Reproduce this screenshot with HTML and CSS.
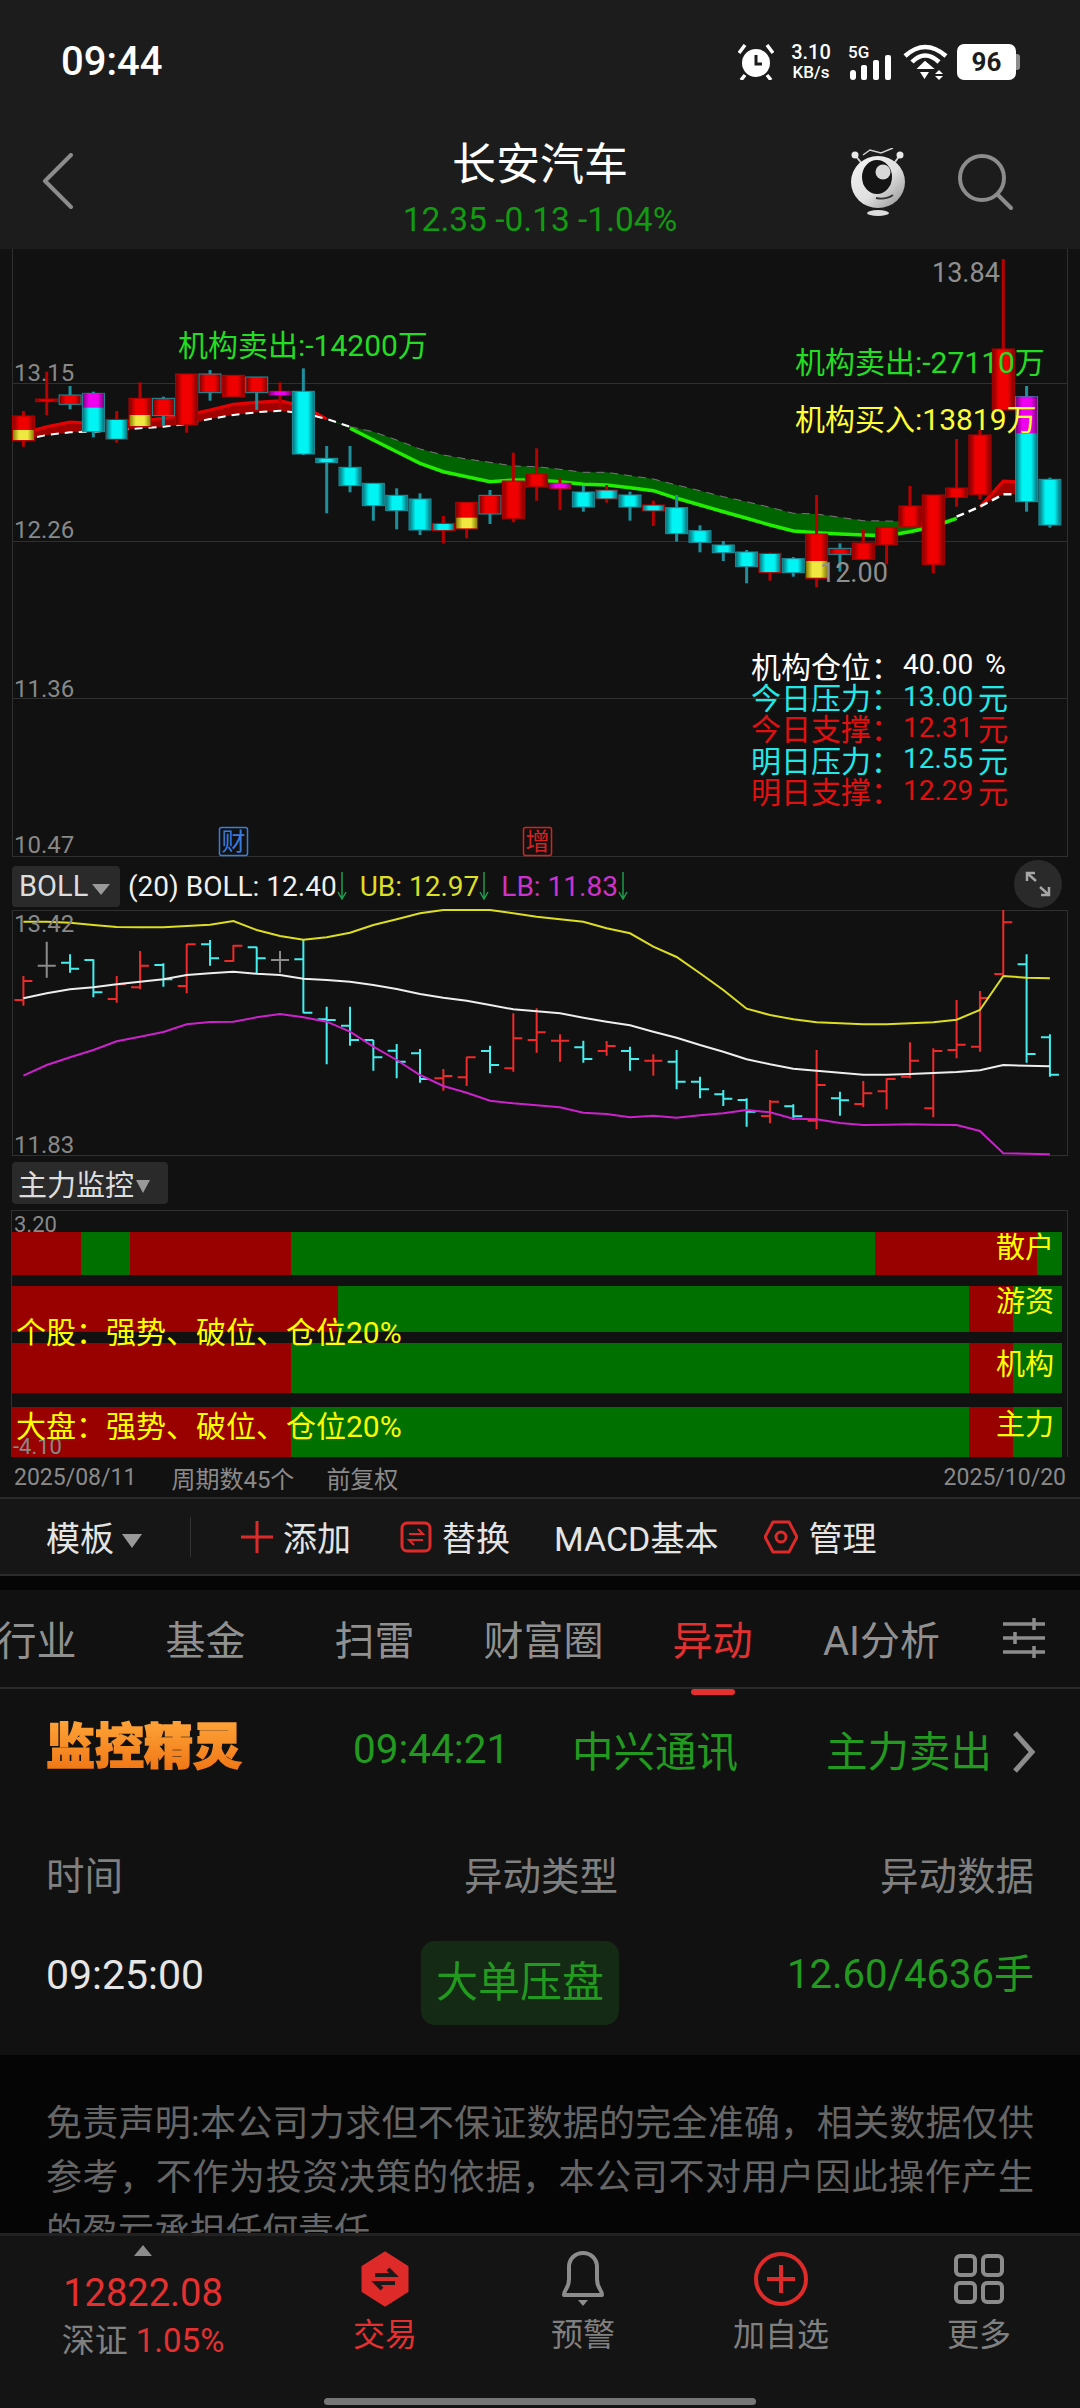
FILE: index.html
```html
<!DOCTYPE html>
<html lang="zh-CN">
<head>
    <meta charset="utf-8">
    <title>长安汽车</title>
    <link rel="stylesheet" href="styles.css">
</head>
<body>
<div class="page">
    <div class="status-bar">
        <span class="clock">09:44</span>
        <div class="status-icons">
            <svg class="ic-alarm" viewBox="0 0 36 36" width="36" height="36">
                <circle cx="18" cy="19" r="14" fill="#fff"/>
                <path d="M18 11v9h6" fill="none" stroke="#1c1c1c" stroke-width="3"/>
                <path d="M1 9 L7 1 M35 9 L29 1 M7 31 L3 36 M29 31 L33 36" stroke="#fff" stroke-width="3.5" fill="none"/>
            </svg>
            <div class="speed"><span>3.10</span><span class="speed-unit">KB/s</span></div>
            <div class="signal">
                <span class="signal-5g">5G</span>
                <svg viewBox="0 0 41 25" width="41" height="25">
                    <rect x="0" y="15" width="6" height="10" rx="3" fill="#fff"/>
                    <rect x="11" y="10" width="6" height="15" rx="2" fill="#fff"/>
                    <rect x="23" y="5" width="6" height="20" rx="2" fill="#fff"/>
                    <rect x="35" y="0" width="6" height="25" rx="2" fill="#fff"/>
                </svg>
            </div>
            <svg class="ic-wifi" viewBox="0 0 45 36" width="45" height="36">
                <path d="M2 12 Q22 -6 43 12" fill="none" stroke="#fff" stroke-width="4.5"/>
                <path d="M9 18 Q22 5 36 18" fill="none" stroke="#fff" stroke-width="4.5"/>
                <path d="M16 24 L22 18 L29 24 Z" fill="#fff" stroke="#fff" stroke-width="2"/>
                <path d="M17 28h9l-4.500 7z M36 26l4 4h-8z M36 36l4-4h-8z" fill="#fff"/>
            </svg>
            <div class="battery"><span class="battery-level">96</span><span class="battery-nub"></span></div>
        </div>
    </div>

    <div class="nav-bar">
        <div class="nav-left">
            <svg viewBox="0 0 32 56" width="32" height="56"><path d="M30 2 L4 28 L30 54" fill="none" stroke="#8c8c8c" stroke-width="4" stroke-linecap="round" stroke-linejoin="round"/></svg>
        </div>
        <div class="nav-title">
            <div class="stock-name">长安汽车</div>
            <div class="stock-price">12.35 -0.13 -1.04%</div>
        </div>
        <div class="nav-right">
            <svg class="mascot" viewBox="0 0 56 68" width="56" height="68">
                <defs>
                    <linearGradient id="silver" x1="0" y1="0" x2="1" y2="1">
                        <stop offset="0" stop-color="#f4f4f4"/>
                        <stop offset="0.55" stop-color="#e0e0e0"/>
                        <stop offset="1" stop-color="#8e8e8e"/>
                    </linearGradient>
                </defs>
                <path d="M13 7 L20 2 L31 5 L43 0" fill="none" stroke="#cfcfcf" stroke-width="1.500"/>
                <path d="M5 7 L13 17 M50 7 L43 17" stroke="#cfcfcf" stroke-width="2"/>
                <circle cx="5" cy="7" r="3.500" fill="#e8e8e8"/>
                <circle cx="50" cy="7" r="3.500" fill="#e8e8e8"/>
                <ellipse cx="28" cy="34" rx="27" ry="26" fill="url(#silver)"/>
                <ellipse cx="27" cy="29" rx="15" ry="17" fill="#141414"/>
                <circle cx="33" cy="24" r="7.500" fill="#d8d8d8"/>
                <path d="M26 50 Q36 52 43 47" fill="none" stroke="#333" stroke-width="1.800"/>
                <ellipse cx="28" cy="65" rx="11" ry="3" fill="#dcdcdc"/>
            </svg>
            <svg viewBox="0 0 56 56" width="56" height="56">
                <circle cx="24" cy="24" r="22" fill="none" stroke="#8c8c8c" stroke-width="4"/>
                <path d="M40 41 L53 54" stroke="#8c8c8c" stroke-width="4" stroke-linecap="round"/>
            </svg>
        </div>
    </div>

    <div class="chart-main">
        <svg class="chart-svg" width="1080" height="608">
            <defs id="gradients"></defs>
            <path class="grid" d="M12 134.500H1068M12 292.500H1068M12 449.500H1068M12 607.500H1068M12.500 0V608M1067.500 0V608"/>
            <g id="candles"></g>
            <text class="axis" x="14" y="132">13.15</text>
            <text class="axis" x="14" y="289">12.26</text>
            <text class="axis" x="14" y="448">11.36</text>
            <text class="axis" x="14" y="604">10.47</text>
            <text class="peak" x="932" y="33">13.84</text>
            <text class="peak" x="820" y="333">12.00</text>
            <text class="note note-green" x="178" y="107">机构卖出:-14200万</text>
            <text class="note note-green" x="795" y="124">机构卖出:-27110万</text>
            <text class="note note-yellow" x="795" y="181">机构买入:13819万</text>
            <rect class="mark mark-blue" x="219.500" y="578.500" width="28" height="28" rx="2"/>
            <text class="mark-text mark-text-blue" x="233.500" y="601">财</text>
            <rect class="mark mark-red" x="523.500" y="578.500" width="28" height="28" rx="2"/>
            <text class="mark-text mark-text-red" x="537.500" y="601">增</text>
        </svg>
        <div class="levels">
            <div class="level level-white"><span class="level-name">机构仓位：</span><span class="level-value level-pct">40.00 %</span></div>
            <div class="level level-cyan"><span class="level-name">今日压力：</span><span class="level-value">13.00</span><span>元</span></div>
            <div class="level level-red"><span class="level-name">今日支撑：</span><span class="level-value">12.31</span><span>元</span></div>
            <div class="level level-cyan"><span class="level-name">明日压力：</span><span class="level-value">12.55</span><span>元</span></div>
            <div class="level level-red"><span class="level-name">明日支撑：</span><span class="level-value">12.29</span><span>元</span></div>
        </div>
    </div>

    <div class="indicator-head">
        <div class="picker"><span>BOLL</span><i class="tri"></i></div>
        <div class="boll-values">
            <span class="boll-white">(20) BOLL: 12.40</span>
            <svg class="down" viewBox="0 0 10 28" width="10" height="28"><path d="M5 0V27M1 20L5 27L9 20" fill="none" stroke="#1d9a4d" stroke-width="1.500"/></svg>
            <span class="boll-yellow">UB: 12.97</span>
            <svg class="down" viewBox="0 0 10 28" width="10" height="28"><path d="M5 0V27M1 20L5 27L9 20" fill="none" stroke="#1d9a4d" stroke-width="1.500"/></svg>
            <span class="boll-magenta">LB: 11.83</span>
            <svg class="down" viewBox="0 0 10 28" width="10" height="28"><path d="M5 0V27M1 20L5 27L9 20" fill="none" stroke="#1d9a4d" stroke-width="1.500"/></svg>
        </div>
        <div class="expand">
            <svg viewBox="0 0 26 26" width="26" height="26"><path d="M2 10V2H10M2 2L11 10M24 16V24H16M24 24L15 16" fill="none" stroke="#a5a5a5" stroke-width="2.500"/></svg>
        </div>
    </div>

    <div class="chart-boll">
        <svg class="chart-svg" width="1080" height="246">
            <rect class="grid" x="12.500" y="0.500" width="1055" height="245"/>
            <g id="bars"></g>
            <text class="axis" x="14" y="22">13.42</text>
            <text class="axis" x="14" y="243">11.83</text>
        </svg>
    </div>

    <div class="monitor-head">
        <div class="picker picker-cn"><span>主力监控</span><i class="tri tri-small"></i></div>
    </div>

    <div class="monitor">
        <div class="mon-row mon-row-1">
            <span class="up" style="flex:69"></span><span class="dn" style="flex:49"></span><span class="up" style="flex:161"></span><span class="dn" style="flex:585"></span><span class="up" style="flex:162"></span><span class="dn" style="flex:25"></span>
        </div>
        <div class="mon-row mon-row-2">
            <span class="up" style="flex:326"></span><span class="dn" style="flex:632"></span><span class="up" style="flex:44"></span><span class="dn" style="flex:49"></span>
        </div>
        <div class="mon-row mon-row-3">
            <span class="up" style="flex:279"></span><span class="dn" style="flex:679"></span><span class="up" style="flex:44"></span><span class="dn" style="flex:49"></span>
        </div>
        <div class="mon-row mon-row-4">
            <span class="up" style="flex:279"></span><span class="dn" style="flex:679"></span><span class="up" style="flex:44"></span><span class="dn" style="flex:49"></span>
        </div>
        <span class="mon-axis mon-axis-top">3.20</span>
        <span class="mon-axis mon-axis-bottom">-4.10</span>
        <span class="mon-tag mon-tag-1">散户</span>
        <span class="mon-tag mon-tag-2">游资</span>
        <span class="mon-tag mon-tag-3">机构</span>
        <span class="mon-tag mon-tag-4">主力</span>
        <span class="mon-note mon-note-1">个股：强势、破位、仓位20%</span>
        <span class="mon-note mon-note-2">大盘：强势、破位、仓位20%</span>
    </div>

    <div class="date-row">
        <span class="date-start">2025/08/11</span>
        <span class="date-count">周期数45个</span>
        <span class="date-adjust">前复权</span>
        <span class="date-end">2025/10/20</span>
    </div>

    <div class="toolbar">
        <div class="tool-template"><span>模板</span><i class="tri"></i></div>
        <div class="tool-sep"></div>
        <svg class="tool-plus" viewBox="0 0 32 32" width="32" height="32"><path d="M16 0V32M0 16H32" stroke="#df2a2a" stroke-width="3"/></svg>
        <span class="tool-label">添加</span>
        <svg class="tool-swap" viewBox="0 0 32 32" width="32" height="32">
            <rect x="2" y="2" width="28" height="28" rx="5" fill="none" stroke="#df2a2a" stroke-width="3"/>
            <path d="M9 13H23L18 8M23 19H9L14 24" fill="none" stroke="#df2a2a" stroke-width="2"/>
        </svg>
        <span class="tool-label">替换</span>
        <span class="tool-label tool-macd">MACD基本</span>
        <svg class="tool-hex" viewBox="0 0 34 34" width="34" height="34">
            <path d="M9 2H25L33 17L25 32H9L1 17Z" fill="none" stroke="#df2a2a" stroke-width="3" stroke-linejoin="round"/>
            <circle cx="17" cy="17" r="5" fill="none" stroke="#df2a2a" stroke-width="3"/>
        </svg>
        <span class="tool-label">管理</span>
    </div>

    <div class="gap"></div>

    <div class="tabs">
        <span class="tab">行业</span>
        <span class="tab">基金</span>
        <span class="tab">扫雷</span>
        <span class="tab">财富圈</span>
        <span class="tab tab-active">异动</span>
        <span class="tab">AI分析</span>
        <svg class="tab-config" viewBox="0 0 44 40" width="44" height="40">
            <path d="M0 6H42M0 20H42M0 34H42" stroke="#8c8c8c" stroke-width="3.500"/>
            <path d="M31 0V12M12 14V26M31 28V40" stroke="#8c8c8c" stroke-width="3.500"/>
        </svg>
    </div>

    <div class="ticker">
        <span class="ticker-logo">监控精灵</span>
        <span class="ticker-time">09:44:21</span>
        <span class="ticker-name">中兴通讯</span>
        <span class="ticker-type">主力卖出</span>
        <svg class="ticker-more" viewBox="0 0 24 42" width="24" height="42"><path d="M3 2L20 21L3 40" fill="none" stroke="#8c8c8c" stroke-width="5"/></svg>
    </div>

    <div class="table-head">
        <span>时间</span>
        <span>异动类型</span>
        <span class="cell-right">异动数据</span>
    </div>
    <div class="table-row">
        <span class="row-time">09:25:00</span>
        <span class="chip">大单压盘</span>
        <span class="row-data">12.60/4636手</span>
    </div>

    <div class="disclaimer">免责声明:本公司力求但不保证数据的完全准确，相关数据仅供参考，不作为投资决策的依据，本公司不对用户因此操作产生的盈亏承担任何责任。</div>

    <div class="bottom-nav">
        <div class="index-box">
            <i class="index-up"></i>
            <div class="index-value">12822.08</div>
            <div class="index-change">深证 <em>1.05%</em></div>
        </div>
        <div class="nav-item nav-item-active">
            <svg viewBox="0 0 48 56" width="48" height="56">
                <path d="M24 2L46 16V40L24 54L2 40V16Z" fill="#df2a2a" stroke="#df2a2a" stroke-width="3" stroke-linejoin="round"/>
                <path d="M14 24H33L27 18M34 32H15L21 38" fill="none" stroke="#1a1a1a" stroke-width="4"/>
            </svg>
            <span>交易</span>
        </div>
        <div class="nav-item">
            <svg viewBox="0 0 48 56" width="48" height="56">
                <path d="M5 44C5 38 10 38 10 28V16C10 8 16 2 24 2C32 2 38 8 38 16V28C38 38 43 38 43 44Z" fill="none" stroke="#8c8c8c" stroke-width="4" stroke-linejoin="round"/>
                <path d="M19 49H29L24 55Z" fill="#8c8c8c"/>
            </svg>
            <span>预警</span>
        </div>
        <div class="nav-item">
            <svg viewBox="0 0 56 56" width="56" height="56">
                <circle cx="28" cy="28" r="25" fill="none" stroke="#df2a2a" stroke-width="4"/>
                <path d="M28 14V42M14 28H42" stroke="#df2a2a" stroke-width="4"/>
            </svg>
            <span>加自选</span>
        </div>
        <div class="nav-item">
            <svg viewBox="0 0 50 50" width="50" height="56">
                <rect x="2" y="2" width="19" height="19" rx="4" fill="none" stroke="#8c8c8c" stroke-width="4"/>
                <rect x="29" y="2" width="19" height="19" rx="4" fill="none" stroke="#8c8c8c" stroke-width="4"/>
                <rect x="2" y="29" width="19" height="19" rx="4" fill="none" stroke="#8c8c8c" stroke-width="4"/>
                <rect x="29" y="29" width="19" height="19" rx="4" fill="none" stroke="#8c8c8c" stroke-width="4"/>
            </svg>
            <span>更多</span>
        </div>
        <div class="home-bar"></div>
    </div>
</div>
<script src="chart.js"></script>
</body>
</html>
```
FILE: styles.css
```css
* {
    box-sizing: border-box;
}
body {
    margin: 0;
    background-color: #111111;
    font-family: Roboto, "Noto Sans CJK SC", sans-serif;
    color: #ffffff;
}
.page {
    width: 1080px;
    height: 2408px;
    overflow: hidden;
    display: flex;
    flex-direction: column;
}

/* Status bar */
.status-bar {
    height: 100px;
    flex: none;
    background-color: #1c1c1c;
    display: flex;
    justify-content: space-between;
    align-items: flex-start;
    padding: 44px 60px 0 61px;
}
.clock {
    font-size: 40px;
    font-weight: 500;
    line-height: 36px;
}
.status-icons {
    display: flex;
    align-items: flex-start;
}
.ic-alarm {
    margin-right: 14px;
}
.speed {
    width: 46px;
    margin-right: 16px;
    display: flex;
    flex-direction: column;
    align-items: center;
    gap: 3px;
    font-size: 20px;
    font-weight: 500;
    line-height: 17px;
}
.speed-unit {
    font-size: 17px;
}
.signal {
    width: 43px;
    height: 36px;
    margin-right: 10px;
    position: relative;
    display: flex;
    align-items: flex-end;
}
.signal-5g {
    position: absolute;
    left: -2px;
    top: 1px;
    font-size: 17px;
    font-weight: 500;
    line-height: 15px;
}
.ic-wifi {
    margin-right: 9px;
}
.battery {
    display: flex;
    align-items: center;
}
.battery-level {
    width: 59px;
    height: 36px;
    border-radius: 7px;
    background-color: #ffffff;
    color: #1c1c1c;
    font-size: 26px;
    font-weight: 700;
    line-height: 36px;
    text-align: center;
}
.battery-nub {
    width: 4px;
    height: 16px;
    border-radius: 0 3px 3px 0;
    background-color: #8c8c8c;
}

/* Title bar */
.nav-bar {
    height: 149px;
    flex: none;
    background-color: #1c1c1c;
    display: grid;
    grid-template-columns: 1fr auto 1fr;
}
.nav-left {
    padding: 53px 0 0 41px;
}
.nav-title {
    padding-top: 39px;
    text-align: center;
}
.stock-name {
    font-size: 44px;
    line-height: 52px;
}
.stock-price {
    margin-top: 9px;
    font-size: 33.500px;
    line-height: 40px;
    color: #129a12;
}
.nav-right {
    display: flex;
    justify-content: flex-end;
    align-items: flex-start;
    gap: 52px;
    padding: 48px 66px 0 0;
}
.nav-right svg:last-child {
    margin-top: 6px;
}

/* Charts */
.chart-main {
    position: relative;
    height: 608px;
    flex: none;
}
.chart-boll {
    height: 246px;
    flex: none;
}
.chart-svg {
    display: block;
    overflow: visible;
}
.grid {
    fill: none;
    stroke: #303030;
    stroke-width: 1;
}
.axis {
    font-size: 24px;
    fill: #888888;
}
.peak {
    font-size: 27px;
    fill: #8f8f8f;
}
.note {
    font-size: 30px;
}
.note-green {
    fill: #22dd22;
}
.note-yellow {
    fill: #ffff33;
}
.mark {
    fill: none;
    stroke-width: 1.500;
}
.mark-blue {
    stroke: #3a7de0;
}
.mark-red {
    stroke: #d82020;
}
.mark-text {
    font-size: 24px;
    text-anchor: middle;
}
.mark-text-blue {
    fill: #3a7de0;
}
.mark-text-red {
    fill: #d82020;
}
.levels {
    position: absolute;
    left: 751px;
    top: 400px;
    font-size: 30px;
}
.level {
    height: 31.400px;
    display: flex;
    align-items: center;
    white-space: nowrap;
}
.level-name {
    width: 152px;
}
.level-value {
    width: 75px;
    font-size: 28px;
}
.level-pct {
    word-spacing: 5px;
}
.level-white {
    color: #ffffff;
}
.level-cyan {
    color: #22e8e8;
}
.level-red {
    color: #e01010;
}

/* Indicator headers */
.indicator-head {
    height: 53px;
    flex: none;
    display: flex;
    align-items: center;
    padding: 0 18px 0 12px;
}
.picker {
    width: 108px;
    height: 41px;
    margin-top: 5px;
    flex: none;
    border-radius: 4px;
    background-color: #2a2a2a;
    color: #dddddd;
    font-size: 29px;
    display: flex;
    align-items: center;
    padding-left: 7px;
    gap: 4px;
}
.picker-cn {
    width: 156px;
    height: 42px;
    margin-top: 0;
    font-size: 29px;
    gap: 2px;
    padding-left: 6px;
}
.tri {
    width: 0;
    height: 0;
    margin-top: 6px;
    border-left: 9px solid transparent;
    border-right: 9px solid transparent;
    border-top: 11px solid #999999;
}
.tri-small {
    border-left-width: 7px;
    border-right-width: 7px;
    border-top-width: 13px;
}
.boll-values {
    margin: 5px 0 0 8px;
    display: flex;
    align-items: center;
    font-size: 28px;
    white-space: nowrap;
}
.boll-white {
    color: #f0f0f0;
}
.boll-yellow {
    margin-left: 13px;
    color: #dede22;
}
.boll-magenta {
    margin-left: 12px;
    color: #cc33cc;
}
.expand {
    width: 48px;
    height: 48px;
    margin-left: auto;
    border-radius: 50%;
    background-color: #2a2a2a;
    display: flex;
    align-items: center;
    justify-content: center;
}
.monitor-head {
    height: 54px;
    flex: none;
    padding: 6px 0 0 12px;
}

/* Monitor panel */
.monitor {
    position: relative;
    height: 247px;
    flex: none;
    margin: 0 12px 0 11px;
    padding: 21px 5px 0 0;
    border: 1px solid #303030;
    border-bottom: none;
}
.mon-row {
    display: flex;
}
.mon-row .up {
    background-color: #990000;
}
.mon-row .dn {
    background-color: #007000;
}
.mon-row-1 {
    height: 43px;
}
.mon-row-2 {
    height: 46px;
    margin-top: 11px;
}
.mon-row-3 {
    height: 50px;
    margin-top: 11px;
}
.mon-row-4 {
    height: 50px;
    margin-top: 14px;
}
.mon-axis {
    position: absolute;
    left: 2px;
    font-size: 22px;
    line-height: 24px;
    color: #888888;
}
.mon-axis-top {
    top: 2px;
}
.mon-axis-bottom {
    top: 224px;
    left: 1px;
}
.mon-tag,
.mon-note {
    position: absolute;
    color: #ffff00;
    white-space: nowrap;
    line-height: 40px;
}
.mon-tag {
    left: 984px;
    font-size: 29px;
}
.mon-tag-1 {
    top: 17px;
}
.mon-tag-2 {
    top: 71px;
}
.mon-tag-3 {
    top: 134px;
}
.mon-tag-4 {
    top: 194px;
}
.mon-note {
    left: 4px;
    font-size: 30px;
}
.mon-note-1 {
    top: 102px;
}
.mon-note-2 {
    top: 196px;
}
.date-row {
    height: 40px;
    flex: none;
    padding: 0 14px;
    display: flex;
    align-items: center;
    color: #8a8a8a;
    font-size: 23px;
}
.date-count {
    margin: 0 32px 0 35px;
    font-size: 24px;
}
.date-adjust {
    font-size: 24px;
}
.date-end {
    margin-left: auto;
}

/* Toolbar */
.toolbar {
    height: 79px;
    flex: none;
    background-color: #161616;
    border-top: 2px solid #2a2a2a;
    border-bottom: 2px solid #2a2a2a;
    display: flex;
    align-items: center;
    padding-left: 46px;
    font-size: 34px;
    color: #e4e4e4;
}
.tool-template {
    display: flex;
    align-items: center;
    gap: 8px;
}
.tool-template .tri {
    margin-top: 8px;
    border-left-width: 10px;
    border-right-width: 10px;
    border-top-width: 14px;
}
.tool-sep {
    width: 1px;
    height: 40px;
    margin: 0 50px 0 48px;
    background-color: #333333;
}
.tool-label {
    margin-left: 10px;
}
.tool-swap {
    margin-left: 49px;
}
.tool-macd {
    margin: 0 46px 0 44px;
}
.gap {
    height: 14px;
    flex: none;
    background-color: #050505;
}

/* Tabs */
.tabs {
    height: 99px;
    flex: none;
    display: flex;
    align-items: center;
    border-bottom: 2px solid #2a2a2a;
    margin-left: -48px;
    padding-bottom: 2px;
}
.tab {
    position: relative;
    width: 169px;
    text-align: center;
    font-size: 40px;
    color: #909090;
    white-space: nowrap;
}
.tab-active {
    color: #e53030;
}
.tab-active::after {
    content: "";
    position: absolute;
    left: 63px;
    bottom: -28px;
    width: 44px;
    height: 6px;
    border-radius: 3px;
    background-color: #e53030;
}
.tab-config {
    margin-left: 37px;
}

/* Ticker line */
.ticker {
    height: 126px;
    flex: none;
    display: flex;
    align-items: center;
    padding: 0 0 7px 46px;
    font-size: 41.500px;
    color: #22991f;
}
.ticker-logo {
    width: 307px;
    font-size: 49px;
    font-weight: 900;
    line-height: 1.200;
    background: linear-gradient(#ffa53a, #ee7010);
    -webkit-background-clip: text;
    background-clip: text;
    color: transparent;
    -webkit-text-stroke: 1.500px transparent;
    white-space: nowrap;
}
.ticker-time {
    width: 219px;
    font-size: 40.500px;
}
.ticker-name {
    width: 254px;
}
.ticker-type {
    width: 186px;
}
.ticker-more {
    margin-top: 7px;
}

/* Table */
.table-head {
    height: 115px;
    flex: none;
    padding: 0 46px;
    display: grid;
    grid-template-columns: 418px 154px 1fr;
    align-items: center;
    color: #808080;
    font-size: 38.500px;
}
.cell-right {
    text-align: right;
}
.table-row {
    height: 125px;
    flex: none;
    padding: 11px 46px 0;
    display: grid;
    grid-template-columns: 375px 198px 1fr;
    align-items: flex-start;
}
.row-time {
    margin-top: 10px;
    font-size: 41px;
    line-height: 48px;
    color: #e6e6e6;
}
.chip {
    height: 84px;
    border-radius: 14px;
    background-color: #152a15;
    color: #22991f;
    font-size: 42px;
    line-height: 84px;
    text-align: center;
}
.row-data {
    margin-top: 10px;
    font-size: 40px;
    line-height: 48px;
    color: #22991f;
    text-align: right;
    white-space: nowrap;
}
.disclaimer {
    flex: 1;
    min-height: 0;
    overflow: hidden;
    background-color: #050505;
    padding: 42px 46px 0;
    font-size: 36px;
    line-height: 54px;
    color: #666666;
    text-align: justify;
}

/* Bottom navigation */
.bottom-nav {
    position: relative;
    height: 175px;
    flex: none;
    background-color: #141414;
    border-top: 3px solid #222222;
    display: grid;
    grid-template-columns: 286px repeat(4, 198px);
}
.index-box {
    text-align: center;
    padding-top: 9px;
}
.index-up {
    display: block;
    width: 0;
    height: 0;
    margin: 0 auto 15px;
    border-left: 9px solid transparent;
    border-right: 9px solid transparent;
    border-bottom: 11px solid #8c8c8c;
}
.index-value {
    font-size: 38px;
    line-height: 44px;
    color: #e53030;
}
.index-change {
    margin-top: 4px;
    font-size: 33px;
    line-height: 44px;
    color: #808080;
}
.index-change em {
    font-style: normal;
    color: #e53030;
}
.nav-item {
    display: flex;
    flex-direction: column;
    align-items: center;
    padding-top: 15px;
    gap: 5px;
    font-size: 32px;
    line-height: 46px;
    color: #808080;
}
.nav-item-active {
    color: #e53030;
}
.home-bar {
    position: absolute;
    left: 324px;
    bottom: 3px;
    width: 432px;
    height: 7px;
    border-radius: 4px;
    background-color: #777777;
}
```
FILE: chart.js
```js
// y values below are in thirds of a pixel, measured from the same origin per chart
const NS = 'http://www.w3.org/2000/svg';
const candleX = i => 23.4 + 23.33 * i;

function add(parent, name, attrs) {
    const node = document.createElementNS(NS, name);
    for (const key in attrs) node.setAttribute(key, attrs[key]);
    parent.appendChild(node);
    return node;
}

function gradient(id, dark, bright) {
    const g = add(document.getElementById('gradients'), 'linearGradient', { id: id, x1: 0, y1: 0, x2: 1, y2: 0 });
    add(g, 'stop', { offset: 0, 'stop-color': dark });
    add(g, 'stop', { offset: 0.3, 'stop-color': bright });
    add(g, 'stop', { offset: 0.7, 'stop-color': bright });
    add(g, 'stop', { offset: 1, 'stop-color': dark });
}
gradient('g-red', '#7a0000', '#f00000');
gradient('g-cyan', '#086a74', '#00f4f4');
gradient('g-yellow', '#8a8000', '#f0e840');
gradient('g-magenta', '#800080', '#f000f0');

const TEAL = '#1f8f9c';
const DARKRED = '#b80000';

// [top, bottom, high, low, kind, accentTop, accentBottom, accentColor]
// kind: r red, rt red with teal wick, c cyan, cr cyan with red wick
const candles = [
    [498, 572, 483, 590, 'r', 540, 570, 'yellow'],
    [447, 455, 365, 495, 'r'],
    [435, 463, 408, 478, 'rt'],
    [430, 545, 425, 562, 'c', 430, 473, 'magenta'],
    [508, 568, 483, 578, 'cr'],
    [445, 530, 397, 530, 'r', 495, 528, 'yellow'],
    [445, 497, 440, 527, 'rt'],
    [372, 524, 372, 548, 'r'],
    [372, 428, 360, 452, 'rt'],
    [376, 440, 376, 440, 'r'],
    [381, 428, 381, 480, 'rt'],
    [424, 435, 397, 475, 'r', 424, 435, 'magenta'],
    [424, 612, 355, 615, 'c'],
    [625, 638, 588, 790, 'c'],
    [652, 707, 588, 727, 'c'],
    [700, 767, 700, 812, 'c'],
    [736, 782, 715, 838, 'c'],
    [747, 840, 730, 855, 'c'],
    [820, 842, 798, 880, 'cr'],
    [757, 837, 757, 865, 'r', 803, 835, 'yellow'],
    [736, 792, 720, 822, 'rt'],
    [693, 805, 608, 817, 'r'],
    [672, 710, 595, 752, 'r'],
    [700, 715, 685, 780, 'r', 700, 715, 'magenta'],
    [726, 771, 707, 785, 'c'],
    [720, 747, 705, 758, 'cr'],
    [735, 771, 725, 812, 'c'],
    [765, 783, 752, 828, 'cr'],
    [773, 851, 735, 875, 'c'],
    [842, 877, 826, 907, 'c'],
    [885, 908, 873, 933, 'c'],
    [906, 950, 900, 1000, 'c'],
    [910, 968, 908, 992, 'cr'],
    [926, 968, 921, 980, 'c'],
    [852, 985, 735, 1012, 'r', 933, 983, 'yellow'],
    [895, 913, 880, 965, 'rt'],
    [879, 928, 840, 930, 'r'],
    [832, 884, 832, 943, 'r'],
    [768, 830, 708, 830, 'r'],
    [735, 943, 735, 970, 'r'],
    [714, 742, 567, 770, 'r'],
    [555, 733, 540, 748, 'r'],
    [297, 480, 27, 480, 'r'],
    [440, 755, 408, 785, 'c', 440, 550, 'magenta'],
    [688, 825, 683, 833, 'c']
];

// moving average band of the main chart
const redLine = [550, 530, 516, 520, 515, 512, 505, 495, 480, 463, 457, 452, 468, 507];
const dashLine = [570, 555, 547, 545, 540, 535, 530, 522, 507, 495, 487, 482, 490, 507, 530, 545, 570, 597, 615, 627, 637, 648, 650, 658, 667, 667, 677, 687, 705, 722, 740, 755, 772, 790, 792, 802, 812, 813, 815, 818, 800, 770, 733, 733];
const greenLine = [535, 570, 605, 640, 665, 680, 695, 690, 690, 695, 703, 705, 713, 722, 745, 765, 785, 805, 825, 843, 848, 852, 855, 857, 845, 830, 805];
const redTail = [770, 693, 697];

const mainY = z => z / 3 + 1;

function points(ys, start, toY) {
    return ys.map((y, k) => candleX(start + k).toFixed(1) + ',' + toY(y).toFixed(1));
}

function band(parent, top, bottom, fill) {
    add(parent, 'polygon', { points: top.concat(bottom.slice().reverse()).join(' '), fill: fill });
}

function drawMain() {
    const g = document.getElementById('candles');
    const redTop = points(redLine, 0, mainY);
    const greenBottom = points(greenLine, 14, mainY);
    band(g, redTop, points(dashLine.slice(0, 14), 0, mainY), '#a00000');
    band(g, points(dashLine.slice(13, 41), 13, mainY), [candleX(13).toFixed(1) + ',' + mainY(507).toFixed(1)].concat(greenBottom), '#006400');
    band(g, points(redTail, 41, mainY), points(dashLine.slice(41, 44), 41, mainY), '#a00000');
    add(g, 'polyline', { points: redTop.join(' '), fill: 'none', stroke: '#e80000', 'stroke-width': 3 });
    add(g, 'polyline', { points: points(redTail, 41, mainY).join(' '), fill: 'none', stroke: '#e80000', 'stroke-width': 3 });
    add(g, 'polyline', { points: greenBottom.join(' '), fill: 'none', stroke: '#22ee00', 'stroke-width': 3.5 });
    add(g, 'polyline', { points: points(dashLine.slice(0, 15), 0, mainY).join(' '), fill: 'none', stroke: '#fff', 'stroke-width': 2, 'stroke-dasharray': '8 6' });
    add(g, 'polyline', { points: points(dashLine.slice(14, 40), 14, mainY).join(' '), fill: 'none', stroke: '#777', 'stroke-width': 1, 'stroke-dasharray': '8 6' });
    add(g, 'polyline', { points: points(dashLine.slice(40), 40, mainY).join(' '), fill: 'none', stroke: '#fff', 'stroke-width': 2.5, 'stroke-dasharray': '8 5' });

    candles.forEach((c, i) => {
        const x = candleX(i);
        const isRed = c[4] === 'r' || c[4] === 'rt';
        const wick = c[4] === 'r' || c[4] === 'cr' ? DARKRED : TEAL;
        add(g, 'rect', { x: x - 1.5, y: mainY(c[2]), width: 3, height: (c[3] - c[2]) / 3, fill: wick });
        add(g, 'rect', {
            x: x - 11, y: mainY(c[0]), width: 22, height: (c[1] - c[0]) / 3,
            fill: isRed ? 'url(#g-red)' : 'url(#g-cyan)', stroke: wick, 'stroke-width': 1
        });
        if (c[7]) {
            add(g, 'rect', { x: x - 10.5, y: mainY(c[5]), width: 21, height: (c[6] - c[5]) / 3, fill: 'url(#g-' + c[7] + ')' });
        }
    });
}

// [high, low, leftTick, rightTick, color]
const bars = [
    [378, 467, 450, 393, 'r'],
    [275, 383, 347, 347, 'g'],
    [313, 368, 338, 356, 'c'],
    [328, 442, 330, 427, 'c'],
    [378, 458, 447, 403, 'r'],
    [303, 418, 412, 347, 'r'],
    [340, 410, 345, 388, 'c'],
    [282, 430, 408, 283, 'r'],
    [270, 347, 283, 325, 'c'],
    [285, 335, 333, 287, 'r'],
    [290, 370, 292, 325, 'c'],
    [303, 368, 330, 330, 'g'],
    [268, 490, 328, 488, 'c'],
    [470, 643, 508, 510, 'c'],
    [470, 587, 527, 570, 'c'],
    [570, 662, 570, 622, 'c'],
    [582, 685, 602, 635, 'c'],
    [597, 698, 610, 687, 'c'],
    [657, 722, 685, 678, 'r'],
    [620, 708, 682, 622, 'r'],
    [587, 670, 603, 645, 'c'],
    [490, 665, 655, 565, 'r'],
    [475, 608, 570, 547, 'r'],
    [553, 635, 572, 572, 'r'],
    [572, 638, 592, 627, 'c'],
    [573, 617, 603, 588, 'r'],
    [590, 662, 603, 627, 'c'],
    [613, 677, 632, 632, 'r'],
    [600, 718, 635, 695, 'c'],
    [680, 745, 695, 718, 'c'],
    [720, 768, 733, 746, 'c'],
    [745, 830, 750, 785, 'c'],
    [750, 820, 798, 755, 'r'],
    [763, 810, 769, 799, 'c'],
    [600, 838, 812, 705, 'r'],
    [725, 797, 745, 751, 'c'],
    [693, 772, 762, 730, 'r'],
    [685, 778, 724, 687, 'r'],
    [577, 685, 680, 632, 'r'],
    [595, 802, 775, 603, 'r'],
    [450, 625, 600, 584, 'r'],
    [423, 605, 590, 444, 'r'],
    [180, 375, 372, 217, 'r'],
    [313, 638, 343, 612, 'c'],
    [553, 680, 562, 674, 'c']
];
const barColors = { r: '#ee2a2a', c: '#44eeee', g: '#8c8c8c' };

const upperBand = [215, 215, 218, 225, 231, 232, 232, 228, 224, 213, 240, 258, 269, 262, 248, 225, 208, 190, 180, 180, 180, 190, 200, 208, 215, 235, 250, 290, 321, 370, 420, 476, 495, 508, 517, 520, 523, 523, 520, 517, 509, 480, 378, 383, 385];
const midBand = [445, 430, 418, 412, 403, 395, 388, 375, 370, 365, 371, 375, 386, 390, 395, 405, 417, 432, 443, 452, 465, 478, 484, 490, 503, 515, 526, 545, 563, 585, 605, 628, 643, 656, 662, 668, 674, 674, 672, 669, 666, 661, 645, 647, 649];
const lowerBand = [677, 645, 622, 600, 574, 560, 546, 523, 516, 515, 502, 492, 502, 515, 545, 590, 630, 675, 708, 728, 752, 760, 766, 772, 788, 792, 802, 797, 803, 796, 790, 780, 787, 806, 808, 819, 825, 824, 823, 824, 825, 843, 910, 911, 913];

const bollY = z => z / 3 - 60;

function drawBoll() {
    const g = document.getElementById('bars');
    bars.forEach((b, i) => {
        const x = candleX(i);
        const d = 'M' + x + ' ' + bollY(b[0]) + 'V' + bollY(b[1]) +
            'M' + (x - 9) + ' ' + bollY(b[2]) + 'H' + x +
            'M' + x + ' ' + bollY(b[3]) + 'H' + (x + 9);
        add(g, 'path', { d: d, fill: 'none', stroke: barColors[b[4]], 'stroke-width': 2 });
    });
    [[upperBand, '#dddd22'], [midBand, '#eeeeee'], [lowerBand, '#cc22cc']].forEach(line => {
        add(g, 'polyline', { points: points(line[0], 0, bollY).join(' '), fill: 'none', stroke: line[1], 'stroke-width': 2 });
    });
}

drawMain();
drawBoll();
```
